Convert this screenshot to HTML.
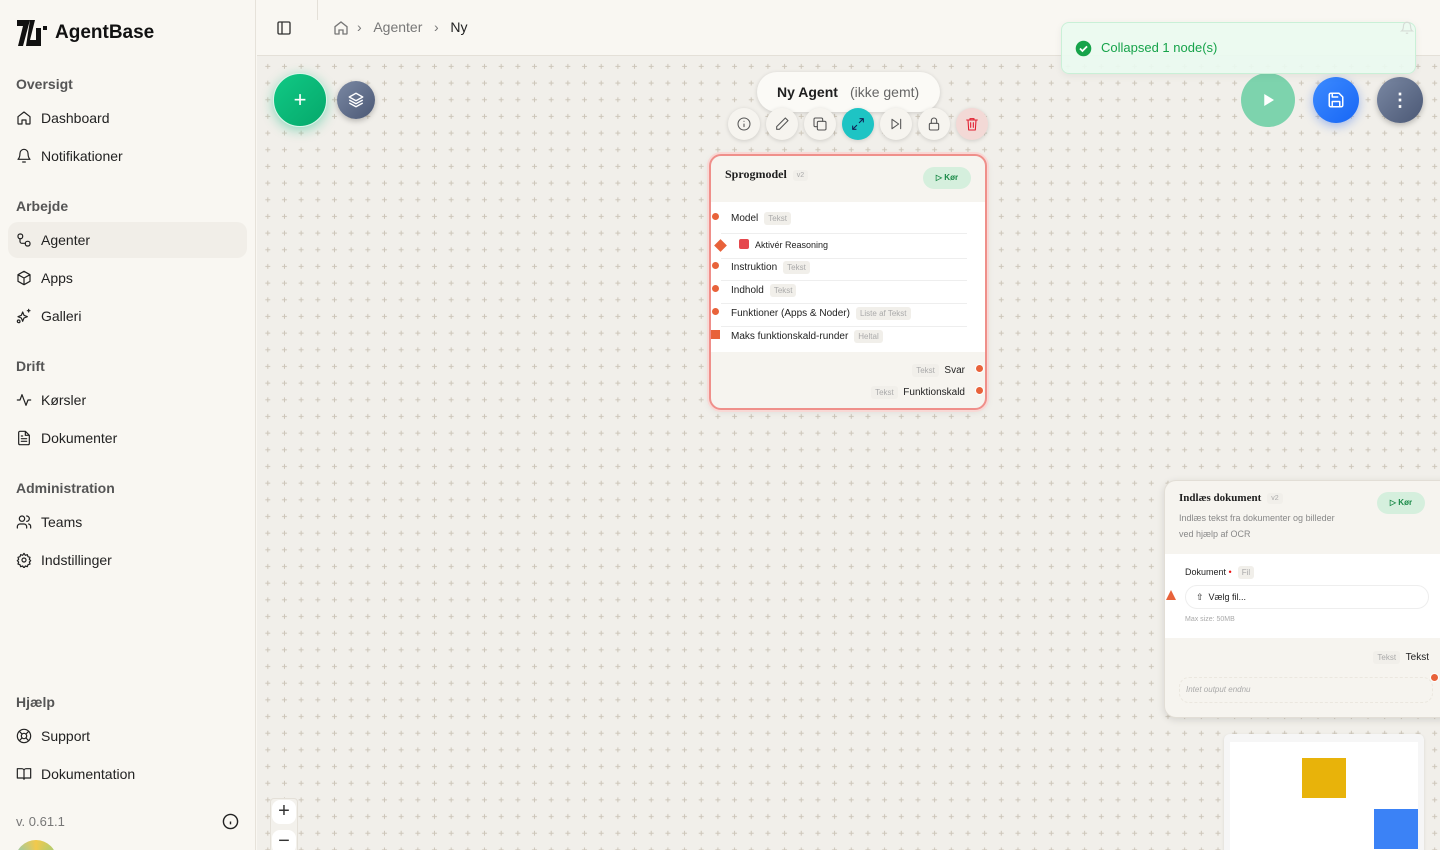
<!DOCTYPE html>
<html style="overflow:hidden"><head><meta charset="utf-8">
<style>
*{box-sizing:border-box;margin:0;padding:0}
html,body{width:1440px;height:850px;overflow:hidden}
body{font-family:"Liberation Sans",sans-serif;color:#1f1f1f;background:#f9f7f2}
#w{position:relative;width:1440px;height:850px;overflow:hidden}
.sb{position:absolute;left:0;top:0;width:256px;height:850px;background:#f9f7f2;border-right:1px solid #e6e2da;overflow:hidden}
.logo{position:absolute;left:17px;top:20px;display:flex;align-items:center;gap:8px;font-size:19px;font-weight:bold;color:#111}
.sec{position:absolute;left:16px;font-size:14px;color:#555;font-weight:bold}
.it{position:absolute;left:8px;width:239px;height:36px;display:flex;align-items:center;padding-left:8px;gap:9px;font-size:14px;color:#222;border-radius:10px}
.it.act{background:#f1eee8}
.it svg{width:16px;height:16px;fill:none;stroke:#222;stroke-width:1.8;stroke-linecap:round;stroke-linejoin:round}
.hdr{position:absolute;left:257px;top:0;right:0;height:56px;background:#f9f7f2;border-bottom:1px solid #e4e0d8}
.cv{position:absolute;left:257px;top:56px;right:0;bottom:0;background:#f1efea;overflow:hidden}
.fab{position:absolute;border-radius:50%;display:flex;align-items:center;justify-content:center}
.node{position:absolute;background:#f6f4ef;border-radius:12px}
.tag{display:inline-block;background:#f1efea;color:#aaa;font-size:8px;padding:2px 4px;border-radius:3px;margin-left:6px;vertical-align:middle}
.row{position:absolute;left:20px;font-size:10px;color:#222}
.dot{position:absolute;width:9px;height:9px;border-radius:50%;background:#e8623a;border:1px solid #fff}
.tb{position:absolute;top:108px;width:32px;height:32px;border-radius:50%;background:#f6f4ef;box-shadow:0 1px 4px rgba(0,0,0,.15);display:flex;align-items:center;justify-content:center}
.tb svg{width:16px;height:16px;fill:none;stroke:#555;stroke-width:1.6;stroke-linecap:round;stroke-linejoin:round}
.sep{position:absolute;left:10px;right:18px;height:1px;background:#eee}
</style></head><body><div id="w">
<div class="sb">
 <div class="logo"><svg width="30" height="26" viewBox="0 0 30 26"><path d="M0 0h13l-7 26H1L6 6H0z M13 0h5l-5 20h9v6H9z" fill="#111"/><path d="M19 8h5v18h-5z" fill="#111"/><path d="M26 6h4v4h-4z" fill="#111"/></svg>AgentBase</div>
 <div class="sec" style="top:76px">Oversigt</div>
 <div class="it" style="top:100px"><svg viewBox="0 0 24 24"><path d="M3 10l9-7 9 7v10a1 1 0 0 1-1 1h-5v-6H9v6H4a1 1 0 0 1-1-1z"/></svg>Dashboard</div>
 <div class="it" style="top:138px"><svg viewBox="0 0 24 24"><path d="M6 8a6 6 0 0 1 12 0c0 7 3 9 3 9H3s3-2 3-9M10 21h4"/></svg>Notifikationer</div>
 <div class="sec" style="top:198px">Arbejde</div>
 <div class="it act" style="top:222px"><svg viewBox="0 0 24 24"><rect x="3" y="3" width="7" height="7" rx="3"/><rect x="14" y="14" width="7" height="7" rx="3"/><path d="M6 10v4a3 3 0 0 0 3 3h5"/></svg>Agenter</div>
 <div class="it" style="top:260px"><svg viewBox="0 0 24 24"><path d="M12 2l9 5v10l-9 5-9-5V7z M3 7l9 5 9-5 M12 12v10"/></svg>Apps</div>
 <div class="it" style="top:298px"><svg viewBox="0 0 24 24"><path d="M10 6l2 5 5 2-5 2-2 5-2-5-5-2 5-2z M19 2v4M17 4h4"/><circle cx="4" cy="20" r="2"/></svg>Galleri</div>
 <div class="sec" style="top:358px">Drift</div>
 <div class="it" style="top:382px"><svg viewBox="0 0 24 24"><path d="M2 12h4l3-8 6 16 3-8h4"/></svg>Kørsler</div>
 <div class="it" style="top:420px"><svg viewBox="0 0 24 24"><path d="M14 2H6a2 2 0 0 0-2 2v16a2 2 0 0 0 2 2h12a2 2 0 0 0 2-2V8z M14 2v6h6 M8 13h8M8 17h8M8 9h2"/></svg>Dokumenter</div>
 <div class="sec" style="top:480px">Administration</div>
 <div class="it" style="top:504px"><svg viewBox="0 0 24 24"><circle cx="9" cy="7" r="4"/><path d="M2 21v-2a4 4 0 0 1 4-4h6a4 4 0 0 1 4 4v2 M16 3a4 4 0 0 1 0 8 M22 21v-2a4 4 0 0 0-3-4"/></svg>Teams</div>
 <div class="it" style="top:542px"><svg viewBox="0 0 24 24"><circle cx="12" cy="12" r="3"/><path d="M12 2l2 3 3-1 1 3 3 1-1 3 2 2-2 2 1 3-3 1-1 3-3-1-2 3-2-3-3 1-1-3-3-1 1-3-2-2 2-2-1-3 3-1 1-3 3 1z"/></svg>Indstillinger</div>
 <div class="sec" style="top:694px">Hjælp</div>
 <div class="it" style="top:718px"><svg viewBox="0 0 24 24"><circle cx="12" cy="12" r="10"/><circle cx="12" cy="12" r="4"/><path d="M5 5l4 4M15 15l4 4M19 5l-4 4M9 15l-4 4"/></svg>Support</div>
 <div class="it" style="top:756px"><svg viewBox="0 0 24 24"><path d="M2 4h7a3 3 0 0 1 3 3v13a2 2 0 0 0-2-2H2z M22 4h-7a3 3 0 0 0-3 3v13a2 2 0 0 1 2-2h8z"/></svg>Dokumentation</div>
 <div style="position:absolute;left:16px;top:814px;font-size:13px;color:#777">v. 0.61.1</div>
 <svg style="position:absolute;left:222px;top:813px" width="17" height="17" viewBox="0 0 24 24" fill="none" stroke="#222" stroke-width="2"><circle cx="12" cy="12" r="10"/><path d="M12 16v-4M12 8h0"/></svg>
 <div style="position:absolute;left:15px;top:840px;width:42px;height:42px;border-radius:50%;background:conic-gradient(#f2c94c,#6fcf97,#56ccf2,#f2c94c)"></div>
</div>
<div class="hdr">
 <div style="position:absolute;left:60px;top:0;width:1px;height:20px;background:#e4e0d8"></div>
 <svg style="position:absolute;left:19px;top:20px" width="16" height="16" viewBox="0 0 24 24" fill="none" stroke="#333" stroke-width="2"><rect x="3" y="3" width="18" height="18" rx="2"/><path d="M9 3v18"/></svg>
 <svg style="position:absolute;left:76px;top:20px" width="16" height="16" viewBox="0 0 24 24" fill="none" stroke="#777" stroke-width="2"><path d="M3 10l9-7 9 7v10a1 1 0 0 1-1 1h-5v-6H9v6H4a1 1 0 0 1-1-1z"/></svg>
 <div style="position:absolute;left:100px;top:19px;font-size:14px;color:#777">›&nbsp;&nbsp;&nbsp;Agenter&nbsp;&nbsp;&nbsp;›&nbsp;&nbsp;&nbsp;<span style="color:#222">Ny</span></div>
</div>
<div class="cv">
 <svg width="1183" height="794" style="position:absolute;left:0;top:0"><defs><pattern id="p" width="16.67" height="16.67" patternUnits="userSpaceOnUse" x="1.5" y="1.2"><path d="M6.8 9.2h5M9.3 6.7v5" stroke="#cdc6b9" stroke-width="1"/></pattern></defs><rect width="100%" height="100%" fill="url(#p)"/></svg>
</div>
<div class="fab" style="left:273px;top:73px;width:54px;height:54px;background:linear-gradient(135deg,#10c985,#06a86b);box-shadow:0 3px 12px rgba(16,185,129,.45);border:1px solid #d8f5e8;color:#fff;font-size:22px">+</div>
<div class="fab" style="left:337px;top:81px;width:38px;height:38px;background:linear-gradient(135deg,#7a88a3,#4b5875);box-shadow:0 2px 6px rgba(0,0,0,.25)"><svg width="18" height="18" viewBox="0 0 24 24" fill="none" stroke="#fff" stroke-width="1.8" stroke-linejoin="round"><path d="M12 3l9 5-9 5-9-5z M3 12l9 5 9-5 M3 16l9 5 9-5"/></svg></div>
<div style="position:absolute;left:757px;top:72px;width:183px;height:40px;border-radius:20px;background:#fbfaf6;box-shadow:0 1px 4px rgba(0,0,0,.15);font-size:14px;line-height:40px;padding-left:20px"><b>Ny Agent</b><span style="color:#666;margin-left:12px">(ikke gemt)</span></div>
<div class="tb" style="left:728px"><svg viewBox="0 0 24 24"><circle cx="12" cy="12" r="9"/><path d="M12 16v-4M12 8h0"/></svg></div>
<div class="tb" style="left:766px"><svg viewBox="0 0 24 24"><path d="M17 3l4 4L8 20H4v-4z"/></svg></div>
<div class="tb" style="left:804px"><svg viewBox="0 0 24 24"><rect x="8" y="8" width="13" height="13" rx="2"/><path d="M16 8V5a2 2 0 0 0-2-2H5a2 2 0 0 0-2 2v9a2 2 0 0 0 2 2h3"/></svg></div>
<div class="tb" style="left:842px;background:#1ec4c4"><svg viewBox="0 0 24 24" style="stroke:#125"><path d="M14 10l6-6M20 4h-5M20 4v5M10 14l-6 6M4 20h5M4 20v-5"/></svg></div>
<div class="tb" style="left:880px"><svg viewBox="0 0 24 24"><path d="M6 5l10 7-10 7z M19 5v14"/></svg></div>
<div class="tb" style="left:918px"><svg viewBox="0 0 24 24"><rect x="5" y="11" width="14" height="10" rx="2"/><path d="M8 11V7a4 4 0 0 1 8 0v4"/></svg></div>
<div class="tb" style="left:956px;background:#f3d9d6"><svg viewBox="0 0 24 24" style="stroke:#e11d2e"><path d="M4 6h16M9 6V4h6v2M6 6l1 15h10l1-15M10 10v7M14 10v7"/></svg></div>
<div class="node" style="left:709px;top:154px;width:278px;height:256px;border:2px solid #ef8f8a;box-shadow:0 0 0 2px #f8d8d5,0 2px 8px rgba(0,0,0,.08)">
 <div style="position:absolute;left:14px;top:11px;font-family:'Liberation Serif',serif;font-weight:bold;font-size:12px">Sprogmodel<span class="tag" style="font-family:'Liberation Sans';font-weight:normal;font-size:7px">v2</span></div>
 <div style="position:absolute;left:212px;top:11px;width:48px;height:22px;border-radius:11px;background:#d5efdd;color:#1a8a48;font-size:8px;font-weight:bold;line-height:22px;text-align:center">▷ Kør</div>
 <div style="position:absolute;left:0;right:0;top:46px;height:150px;background:#fff"></div>
 <div class="row" style="top:56px">Model<span class="tag">Tekst</span></div>
 <div class="sep" style="top:77px"></div>
 <div class="row" style="top:83px;left:28px"><span style="display:inline-block;width:10px;height:10px;background:#e5484d;border-radius:2px;vertical-align:-1px;margin-right:6px"></span><span style="font-size:9px">Aktivér Reasoning</span></div>
 <div class="sep" style="top:102px"></div>
 <div class="row" style="top:105px">Instruktion<span class="tag">Tekst</span></div>
 <div class="sep" style="top:124px"></div>
 <div class="row" style="top:128px">Indhold<span class="tag">Tekst</span></div>
 <div class="sep" style="top:147px"></div>
 <div class="row" style="top:151px">Funktioner (Apps &amp; Noder)<span class="tag">Liste af Tekst</span></div>
 <div class="sep" style="top:170px"></div>
 <div class="row" style="top:174px">Maks funktionskald-runder<span class="tag">Heltal</span></div>
 <div style="position:absolute;right:20px;top:208px;font-size:10px"><span class="tag">Tekst</span>&nbsp;&nbsp;Svar</div>
 <div style="position:absolute;right:20px;top:230px;font-size:10px"><span class="tag">Tekst</span>&nbsp;&nbsp;Funktionskald</div>
</div>
<div class="dot" style="left:711px;top:212px"></div>
<div style="position:absolute;left:716px;top:241px;width:9px;height:9px;background:#e8623a;transform:rotate(45deg)"></div>
<div class="dot" style="left:711px;top:261px"></div>
<div class="dot" style="left:711px;top:284px"></div>
<div class="dot" style="left:711px;top:307px"></div>
<div style="position:absolute;left:711px;top:330px;width:9px;height:9px;background:#e8623a"></div>
<div class="dot" style="left:975px;top:364px"></div>
<div class="dot" style="left:975px;top:386px"></div>
<div class="node" style="left:1164px;top:480px;width:290px;height:238px;border:1px solid #e2ded6;box-shadow:0 2px 8px rgba(0,0,0,.12)">
 <div style="position:absolute;left:14px;top:11px;font-family:'Liberation Serif',serif;font-weight:bold;font-size:11px">Indlæs dokument<span class="tag" style="font-family:'Liberation Sans';font-weight:normal;font-size:7px">v2</span></div>
 <div style="position:absolute;left:212px;top:11px;width:48px;height:22px;border-radius:11px;background:#d5efdd;color:#1a8a48;font-size:8px;font-weight:bold;line-height:22px;text-align:center">▷ Kør</div>
 <div style="position:absolute;left:14px;top:29px;font-size:9px;color:#888;line-height:16px">Indlæs tekst fra dokumenter og billeder<br>ved hjælp af OCR</div>
 <div style="position:absolute;left:0;right:0;top:73px;height:84px;background:#fff"></div>
 <div style="position:absolute;left:20px;top:85px;font-size:9px">Dokument <span style="color:#e11">•</span><span class="tag">Fil</span></div>
 <div style="position:absolute;left:20px;top:104px;width:244px;height:24px;border:1px solid #eee;border-radius:12px;font-size:9px;line-height:22px;padding-left:10px">⇧&nbsp; Vælg fil...</div>
 <div style="position:absolute;left:20px;top:135px;font-size:7px;color:#aaa">Max size: 50MB</div>
 <div style="position:absolute;right:24px;top:170px;font-size:10px"><span class="tag">Tekst</span>&nbsp;&nbsp;Tekst</div>
 <div style="position:absolute;left:14px;top:196px;width:254px;height:26px;border:1px dashed #ebe7df;border-radius:10px;font-size:8px;font-style:italic;color:#aaa;line-height:24px;padding-left:6px">Intet output endnu</div>
</div>
<div style="position:absolute;left:1166px;top:590px;width:0;height:0;border-left:5px solid transparent;border-right:5px solid transparent;border-bottom:10px solid #e8623a"></div>
<div class="dot" style="left:1430px;top:673px"></div>
<div style="position:absolute;left:1224px;top:734px;width:200px;height:130px;background:#f6f6f6;border-radius:6px;box-shadow:0 1px 3px rgba(0,0,0,.1)">
 <div style="position:absolute;left:6px;top:8px;right:6px;bottom:0;background:#fff"></div>
 <div style="position:absolute;left:78px;top:24px;width:44px;height:40px;background:#e8b30a"></div>
 <div style="position:absolute;left:150px;top:75px;width:44px;height:40px;background:#3b82f6"></div>
</div>
<div style="position:absolute;left:270px;top:798px;width:28px;height:60px;background:#f3f1ec;border:1px solid #e4e0d8;border-radius:4px"></div>
<div style="position:absolute;left:272px;top:800px;width:24px;height:24px;border-radius:8px;background:#fff;text-align:center;font-size:20px;line-height:23px;color:#333">+</div>
<div style="position:absolute;left:272px;top:830px;width:24px;height:24px;border-radius:8px;background:#fff;text-align:center;font-size:20px;line-height:22px;color:#333">−</div>
<div class="fab" style="left:1241px;top:73px;width:54px;height:54px;background:#7dd3ad"><svg width="18" height="18" viewBox="0 0 24 24"><path d="M7 4l13 8-13 8z" fill="#fff"/></svg></div>
<div class="fab" style="left:1313px;top:77px;width:46px;height:46px;background:linear-gradient(135deg,#3d8bff,#1766f5);box-shadow:0 3px 10px rgba(37,99,235,.4)"><svg width="18" height="18" viewBox="0 0 24 24" fill="none" stroke="#fff" stroke-width="2" stroke-linejoin="round"><path d="M5 3h11l5 5v11a2 2 0 0 1-2 2H5a2 2 0 0 1-2-2V5a2 2 0 0 1 2-2z M7 3v5h8 M7 21v-7h10v7"/></svg></div>
<div class="fab" style="left:1377px;top:77px;width:46px;height:46px;background:linear-gradient(135deg,#7a88a3,#4b5875);box-shadow:0 2px 6px rgba(0,0,0,.25);color:#fff;font-size:18px;font-weight:bold">⋮</div>
<div style="position:absolute;left:1061px;top:22px;width:355px;height:52px;background:rgba(234,250,240,.92);border:1px solid #c9f0d7;border-radius:8px;box-shadow:0 2px 8px rgba(0,0,0,.06)">
 <svg style="position:absolute;left:13px;top:17px" width="17" height="17" viewBox="0 0 24 24"><circle cx="12" cy="12" r="11" fill="#16a34a"/><path d="M7 12l3.5 3.5L17 9" fill="none" stroke="#fff" stroke-width="2.5"/></svg>
 <div style="position:absolute;left:39px;top:17px;font-size:13px;color:#16a34a">Collapsed 1 node(s)</div>
 <svg style="position:absolute;left:338px;top:-2px" width="14" height="14" viewBox="0 0 24 24" fill="none" stroke="#d6dcd6" stroke-width="2"><path d="M6 8a6 6 0 0 1 12 0c0 7 3 9 3 9H3s3-2 3-9M10 21h4"/></svg>
</div>
</div></body></html>
